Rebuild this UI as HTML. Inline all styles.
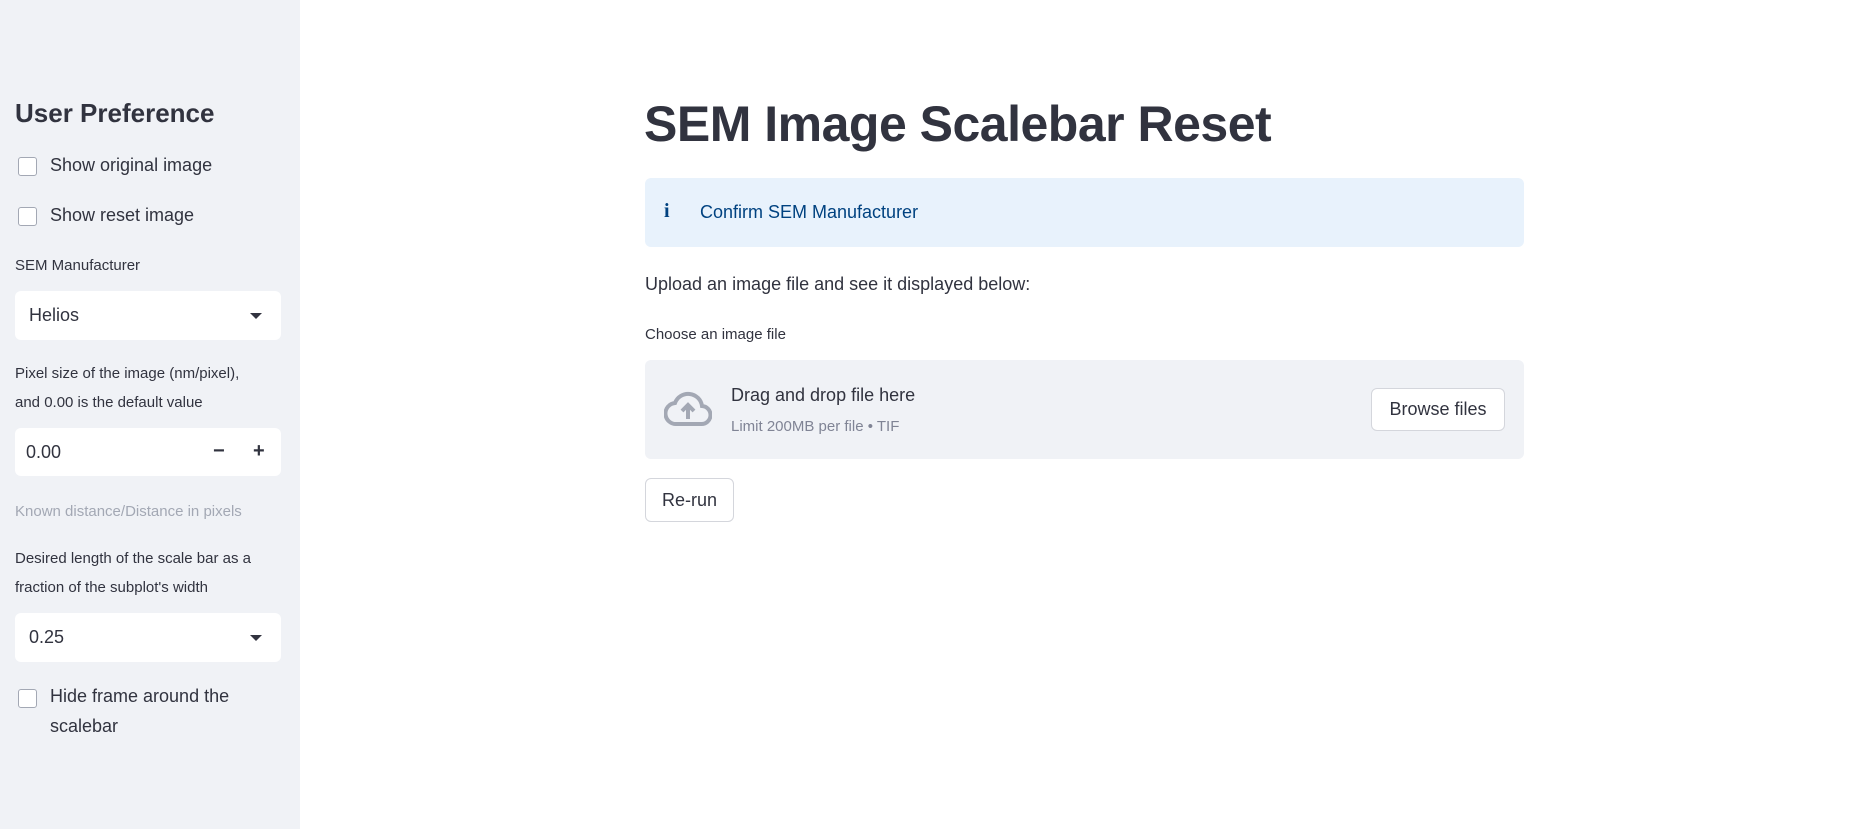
<!DOCTYPE html>
<html><head><meta charset="utf-8"><style>
*{box-sizing:border-box;margin:0;padding:0}
body{width:1860px;height:829px;background:#fff;font-family:"Liberation Sans",sans-serif;color:#31333f;position:relative;overflow:hidden}
.sb{position:absolute;left:0;top:0;width:300px;height:829px;background:#f0f2f6}
.a{position:absolute;white-space:nowrap}
.cb{position:absolute;width:19px;height:19px;border:1.5px solid #a3a8b4;border-radius:3px;background:#fff}
.box{position:absolute;background:#fff;border-radius:6px}
.tri{position:absolute;width:0;height:0;border-left:6px solid transparent;border-right:6px solid transparent;border-top:6px solid #31333f}
.btn{position:absolute;background:#fff;border:1px solid #d4d6dc;border-radius:6px;font-size:18px;display:flex;align-items:center;justify-content:center}
</style></head><body>
<div class="sb">
<div class="a" style="left:15px;top:98px;font-size:26px;font-weight:bold">User Preference</div>
<div class="cb" style="left:18px;top:157px"></div>
<div class="a" style="left:50px;top:155px;font-size:18px">Show original image</div>
<div class="cb" style="left:18px;top:207px"></div>
<div class="a" style="left:50px;top:205px;font-size:18px">Show reset image</div>
<div class="a" style="left:15px;top:257px;font-size:15px">SEM Manufacturer</div>
<div class="box" style="left:15px;top:291px;width:266px;height:49px"></div>
<div class="a" style="left:29px;top:305px;font-size:18px">Helios</div>
<div class="tri" style="left:250px;top:313px"></div>
<div class="a" style="left:15px;top:365px;font-size:15px">Pixel size of the image (nm/pixel),</div>
<div class="a" style="left:15px;top:394px;font-size:15px">and 0.00 is the default value</div>
<div class="box" style="left:15px;top:428px;width:266px;height:48px"></div>
<div class="a" style="left:26px;top:442px;font-size:18px">0.00</div>
<div class="a" style="left:213px;top:440px;font-size:20px;font-weight:bold">−</div>
<div class="a" style="left:253px;top:440px;font-size:20px;font-weight:bold">+</div>
<div class="a" style="left:15px;top:503px;font-size:15px;color:#a3a8b4">Known distance/Distance in pixels</div>
<div class="a" style="left:15px;top:550px;font-size:15px">Desired length of the scale bar as a</div>
<div class="a" style="left:15px;top:579px;font-size:15px">fraction of the subplot's width</div>
<div class="box" style="left:15px;top:613px;width:266px;height:49px"></div>
<div class="a" style="left:29px;top:627px;font-size:18px">0.25</div>
<div class="tri" style="left:250px;top:635px"></div>
<div class="cb" style="left:18px;top:689px"></div>
<div class="a" style="left:50px;top:686px;font-size:18px">Hide frame around the</div>
<div class="a" style="left:50px;top:716px;font-size:18px">scalebar</div>
</div>

<div class="a" style="left:644px;top:95px;font-size:50px;font-weight:bold;letter-spacing:-0.5px">SEM Image Scalebar Reset</div>
<div style="position:absolute;left:645px;top:178px;width:879px;height:69px;background:#e8f2fc;border-radius:6px"></div>
<div class="a" style="left:664px;top:200px;font-size:20px;font-weight:bold;color:#004280;font-family:'Liberation Serif',serif">i</div>
<div class="a" style="left:700px;top:202px;font-size:18px;color:#004280">Confirm SEM Manufacturer</div>
<div class="a" style="left:645px;top:274px;font-size:18px">Upload an image file and see it displayed below:</div>
<div class="a" style="left:645px;top:326px;font-size:15px">Choose an image file</div>
<div style="position:absolute;left:645px;top:360px;width:879px;height:99px;background:#f0f2f6;border-radius:6px"></div>
<svg style="position:absolute;left:664px;top:390px" width="48" height="38" viewBox="0 0 48 38"><path d="M13 34h24a9 9 0 0 0 1-18A14 14 0 0 0 11 13 10.5 10.5 0 0 0 13 34z" fill="none" stroke="#a3a8b4" stroke-width="4"/><path d="M24 29V15M18 21l6-6 6 6" fill="none" stroke="#a3a8b4" stroke-width="4"/></svg>
<div class="a" style="left:731px;top:385px;font-size:18px">Drag and drop file here</div>
<div class="a" style="left:731px;top:418px;font-size:15px;color:#808495">Limit 200MB per file • TIF</div>
<div class="btn" style="left:1371px;top:388px;width:134px;height:43px">Browse files</div>
<div class="btn" style="left:645px;top:478px;width:89px;height:44px">Re-run</div>
</body></html>
